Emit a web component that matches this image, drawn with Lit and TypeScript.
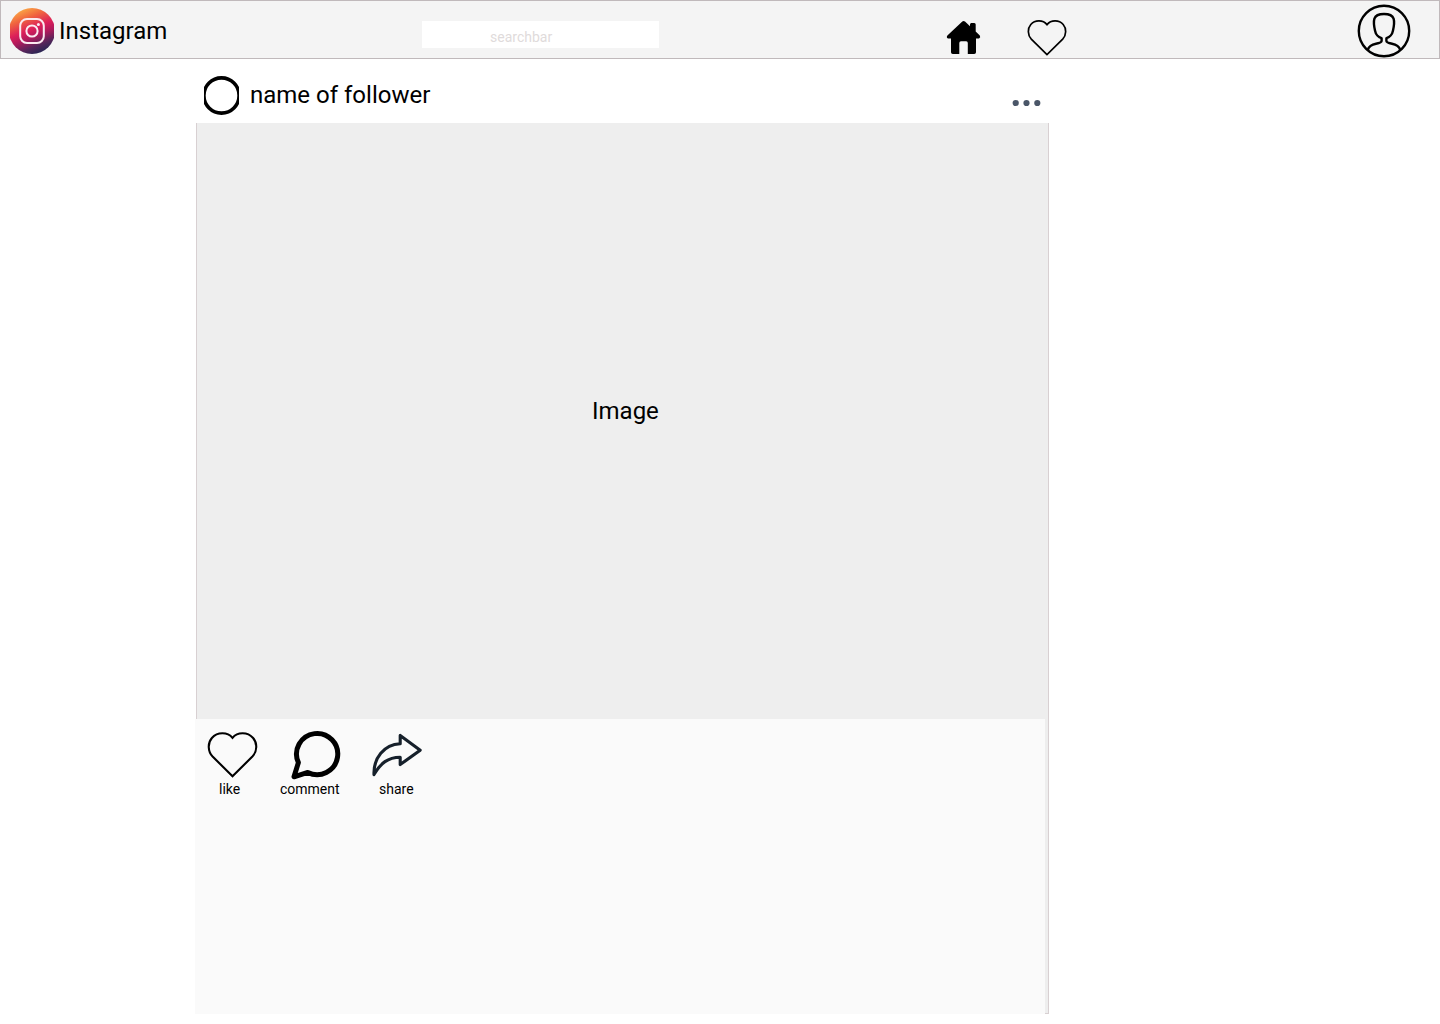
import { LitElement, html, css } from "lit";
import { customElement } from "lit/decorators.js";

@customElement("app-header")
class AppHeader extends LitElement {
  static styles = css`
    :host { display: block; }
    .bar {
      box-sizing: border-box; height: 59px; display: flex; align-items: flex-start;
      background: #f4f4f4; border: 1px solid #c0b9bb; padding: 0 28px 0 9px;
    }
    svg { display: block; flex: none; }
    .logo { margin-top: 7px; }
    .brand { width: 363px; margin: 16px 0 0 5px; font-size: 24px; line-height: 29px; }
    .search {
      box-sizing: border-box; width: 237px; height: 27px; margin-top: 20px; padding: 8px 0 0 68px;
      background: #fff; color: #dfdbdb; font-size: 14px; line-height: 17px;
    }
    .home { margin: 19px 0 0 287px; }
    .heart { margin: 18px 0 0 46px; }
    .user { margin: 3px 0 0 auto; }
  `;
  render() {
    return html`
      <header class="bar">
        <svg class="logo" width="44" height="46" viewBox="10 8 44 46">
          <defs>
            <linearGradient id="g" x1="0.27" y1="0.02" x2="0.68" y2="1">
              <stop offset="0" stop-color="#fbaa46" />
              <stop offset="0.22" stop-color="#f0643f" />
              <stop offset="0.46" stop-color="#dc1f5a" />
              <stop offset="0.62" stop-color="#b01a5c" />
              <stop offset="0.82" stop-color="#55255a" />
              <stop offset="1" stop-color="#212552" />
            </linearGradient>
          </defs>
          <circle cx="32" cy="31" r="23" fill="url(#g)" />
          <g fill="none" stroke="#fbeaf0" stroke-width="2">
            <rect x="20.2" y="19" width="23.6" height="24" rx="6.8" />
            <circle cx="32" cy="31" r="5.6" />
          </g>
          <circle cx="38.4" cy="24.4" r="1.5" fill="#fbeaf0" />
        </svg>
        <div class="brand">Instagram</div>
        <div class="search">searchbar</div>
        <svg class="home" width="35" height="35" viewBox="946 20 35 35">
          <path d="M962.3 21.6Q963.6 20.4 965 21.6L970 26.2V24.4Q970 22.9 971.4 22.9H974.3Q975.7 22.9 975.7 24.4V31.6L979.8 35.6Q981 37.6 979 38.6H976V52.2Q976 54 974.2 54H967.8V43Q967.8 41.3 966.2 41.3H961Q959.3 41.3 959.3 43V54H952.8Q951 54 951 52.2V38.6H948Q946 37.6 947.4 35.6Z" />
        </svg>
        <svg class="heart" width="40" height="38" viewBox="1027 19 40 38">
          <path fill="none" stroke="#000" stroke-width="1.7" d="M1047 54.6L1031.3 39.2C1027.5 35.2 1027.4 28.4 1030.8 24.5C1035 19.6 1043 19.7 1047 24.6C1051 19.7 1059 19.6 1063.2 24.5C1066.6 28.4 1066.5 35.2 1062.7 39.2Z" />
        </svg>
        <svg class="user" width="54" height="54" viewBox="1357 4 54 54">
          <g fill="none" stroke="#000" stroke-width="2.4" stroke-linejoin="round">
            <circle cx="1384" cy="31" r="25.2" />
            <path d="M1367.8 49.8C1369 46 1372 44.4 1376 43.7C1380 43 1381.6 42.4 1381.6 41V38.2C1378.6 37.4 1375.6 34.2 1375 30.5C1374.2 27 1373.4 22 1374.4 18.6C1375.6 15.2 1379 14 1384 14C1389 14 1392.4 15.2 1393.6 18.6C1394.6 22 1393.8 27 1393 30.5C1392.4 34.2 1389.4 37.4 1386.4 38.2V41C1386.4 42.4 1388 43 1392 43.7C1396 44.4 1399 46 1400.2 49.8" />
          </g>
        </svg>
      </header>
    `;
  }
}

@customElement("app-post")
class AppPost extends LitElement {
  static styles = css`
    :host { display: block; width: 854px; margin-left: 195px; }
    svg { display: block; flex: none; }
    .head { height: 64px; display: flex; align-items: flex-start; }
    .avatar { margin: 17px 0 0 9px; }
    .name { margin: 22px 0 0 11px; font-size: 24px; line-height: 29px; }
    .more { margin: 40px 8px 0 auto; }
    .body {
      box-sizing: border-box; height: 891px; margin-left: 1px; background: #eee;
      border: solid #d8d0d2; border-width: 0 1px 1px;
    }
    .picture {
      box-sizing: border-box; height: 596px; padding: 274px 0 0 395px;
      font-size: 24px; line-height: 29px;
    }
    .actions {
      box-sizing: border-box; width: 850px; height: 295px; margin-left: -2px; background: #fafafa;
      display: flex; align-items: flex-start; padding-top: 10px;
    }
    .action { font-size: 14px; line-height: 17px; }
    .action span { display: block; margin-top: 1px; }
    .like { width: 85px; padding-left: 12px; box-sizing: border-box; }
    .like span { padding-left: 12px; }
    .comment { width: 91px; }
    .comment svg { margin-left: 10px; }
    .share span { padding-left: 8px; }
  `;
  render() {
    return html`
      <div class="head">
        <svg class="avatar" width="35" height="39" viewBox="204 76 35 39">
          <circle cx="221.5" cy="95.5" r="17.6" fill="none" stroke="#000" stroke-width="3.6" />
        </svg>
        <div class="name">name of follower</div>
        <svg class="more" width="29" height="8" viewBox="1012 99 29 8" fill="#4a5668">
          <circle cx="1015.7" cy="103" r="3.1" />
          <circle cx="1026.5" cy="103" r="3.1" />
          <circle cx="1037.3" cy="103" r="3.1" />
        </svg>
      </div>
      <div class="body">
        <div class="picture">Image</div>
        <div class="actions">
          <div class="action like">
            <svg width="51" height="51" viewBox="207 729 51 51">
              <path fill="none" stroke="#000" stroke-width="2.1" d="M232.5 776.3L212.6 756.5C207.7 751.4 207.5 742.9 211.9 738C217.4 731.6 227.6 731.8 232.5 737.8C237.4 731.8 247.6 731.6 253.1 738C257.5 742.9 257.3 751.4 252.4 756.5Z" />
            </svg>
            <span>like</span>
          </div>
          <div class="action comment">
            <svg width="51" height="51" viewBox="290 729 51 51">
              <path fill="none" stroke="#000" stroke-width="5" stroke-linejoin="round" d="M294 776.8L298.4 762.6A20.6 20.6 0 1 1 307.8 772.4Z" />
            </svg>
            <span>comment</span>
          </div>
          <div class="action share">
            <svg width="51" height="51" viewBox="371 729 51 51">
              <path fill="none" stroke="#16202b" stroke-width="3.1" stroke-linejoin="round" d="M400.2 735.4L420.2 750.2L400.2 764.6V757.2C388 757.4 380.5 763 374 774.6C373.3 758 384 744.6 400.2 743.8Z" />
            </svg>
            <span>share</span>
          </div>
        </div>
      </div>
    `;
  }
}

@customElement("app-root")
class AppRoot extends LitElement {
  static styles = css`
    :host {
      display: block; width: 1440px; height: 1024px; overflow: hidden;
      background: #fff; color: #000; font-family: Roboto, sans-serif;
    }
  `;
  render() {
    return html`<app-header></app-header><app-post></app-post>`;
  }
}
